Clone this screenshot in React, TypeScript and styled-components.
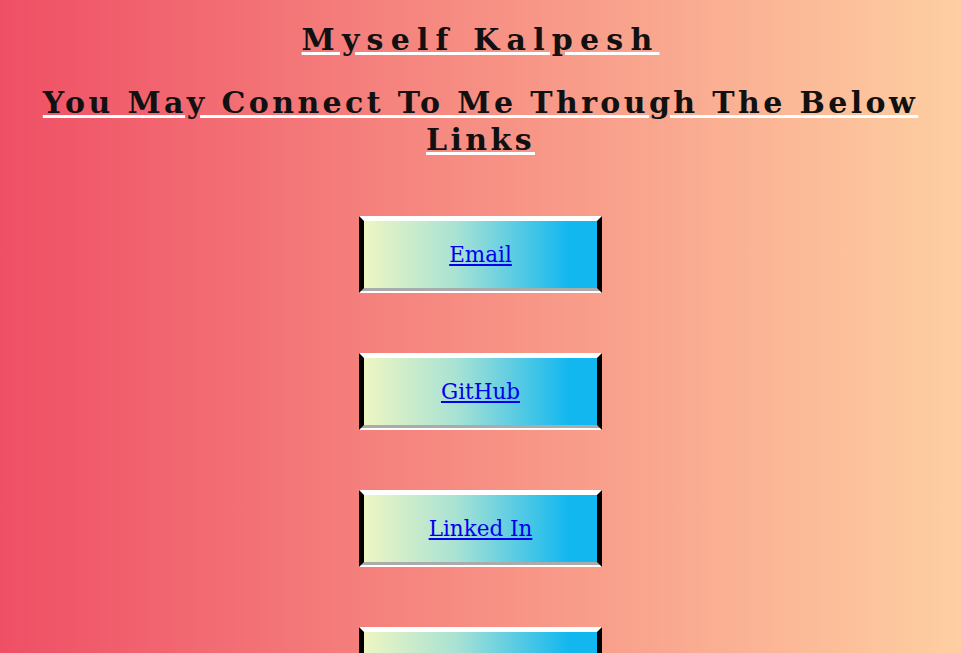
import * as React from 'react';
import styled, { createGlobalStyle } from 'styled-components';

const links = [
  { label: 'Email', href: '#email' },
  { label: 'GitHub', href: '#github' },
  { label: 'Linked In', href: '#linkedin' },
  { label: 'Twitter', href: '#twitter' },
];

const GlobalStyle = createGlobalStyle`
  html, body {
    margin: 0;
    min-height: 100%;
  }
  body {
    background: linear-gradient(to right, #ef4f65, #fecfa2);
    font-family: "DejaVu Serif", "Liberation Serif", serif;
  }
`;

export default function App() {
  return (
    <>
      <GlobalStyle />
      <Page>
        <Title>Myself Kalpesh</Title>
        <Subtitle>You May Connect To Me Through The Below Links</Subtitle>
        <LinkList>
          {links.map((link) => (
            <LinkBox key={link.label}>
              <Anchor href={link.href}>{link.label}</Anchor>
            </LinkBox>
          ))}
        </LinkList>
      </Page>
    </>
  );
}

const Page = styled.div`
  min-height: 100vh;
  padding: 8px;
  box-sizing: border-box;
  text-align: center;
`;

const Title = styled.h1`
  margin: 14px 0 0;
  font-size: 30px;
  line-height: 36px;
  font-weight: bold;
  letter-spacing: 0.24em;
  color: #111;
  text-decoration: underline;
  text-decoration-color: #fff;
  text-decoration-thickness: 3px;
`;

const Subtitle = styled.h2`
  margin: 26px 0 0;
  font-size: 30px;
  line-height: 37px;
  font-weight: bold;
  letter-spacing: 0.113em;
  color: #111;
  text-decoration: underline;
  text-decoration-color: #fff;
  text-decoration-thickness: 3px;
`;

const LinkList = styled.div`
  display: flex;
  flex-direction: column;
  align-items: center;
  gap: 60px;
  margin-top: 58px;
`;

const LinkBox = styled.div`
  width: 233px;
  height: 67px;
  display: flex;
  align-items: center;
  justify-content: center;
  border-width: 5px;
  border-style: solid solid groove solid;
  border-color: #fff #000 #fff #000;
  background: linear-gradient(to right, #eef6c2, #a8e2d4 40%, #12b7f0 88%);
`;

const Anchor = styled.a`
  font-family: "DejaVu Serif", serif;
  font-size: 21.5px;
  color: #0000ee;
`;
